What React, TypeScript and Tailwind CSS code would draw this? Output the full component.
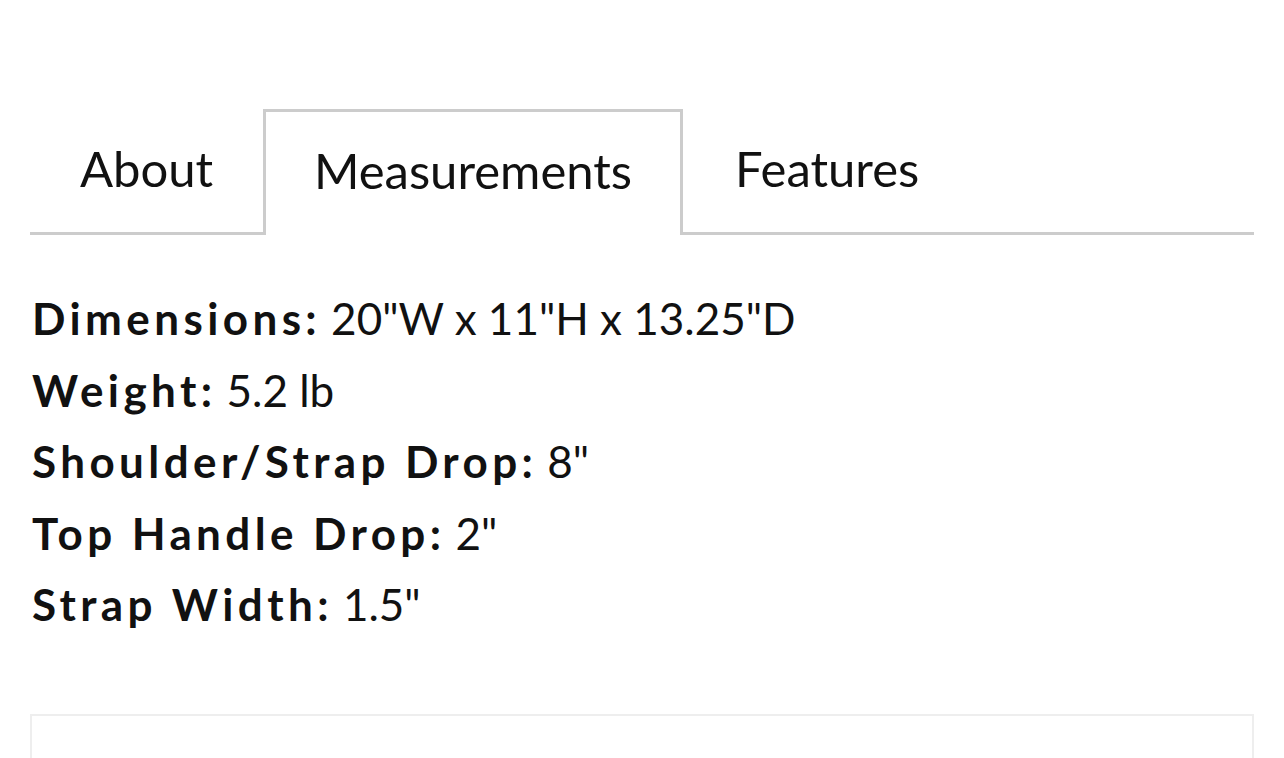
import React from "react";

const rows: [string, string][] = [
  ["Dimensions:", "20\"W x 11\"H x 13.25\"D"],
  ["Weight:", "5.2 lb"],
  ["Shoulder/Strap Drop:", "8\""],
  ["Top Handle Drop:", "2\""],
  ["Strap Width:", "1.5\""],
];

export default function App() {
  return (
    <div
      className="h-[758px] overflow-hidden bg-white px-[30px] pt-[109px] text-[#111]"
      style={{ fontFamily: "Lato, 'Open Sans', sans-serif" }}
    >
      <div className="flex border-b-[3px] border-[#cccccc]">
        <div className="-mb-[3px] flex h-[126px] w-[233px] items-center justify-center border-[3px] border-transparent pb-[6px] text-[49px]">
          About
        </div>
        <div className="-mb-[3px] flex h-[126px] w-[420px] items-center justify-center border-[3px] border-b-0 border-[#cccccc] bg-white pb-[6px] text-[49px]">
          Measurements
        </div>
        <div className="-mb-[3px] flex h-[126px] items-center border-[3px] border-transparent pb-[6px] pl-[49px] text-[49px]">
          Features
        </div>
      </div>
      <div className="pt-[48px] pl-[2px]">
        {rows.map(([k, v]) => (
          <div key={k} className="text-[44px] leading-[71.5px] whitespace-nowrap">
            <span className="font-bold tracking-[0.1em]">{k}</span>
            <span className="pl-[10px]">{v}</span>
          </div>
        ))}
      </div>
      <div className="mt-[73px] h-[60px] border-2 border-[#eeeeee]" />
    </div>
  );
}
